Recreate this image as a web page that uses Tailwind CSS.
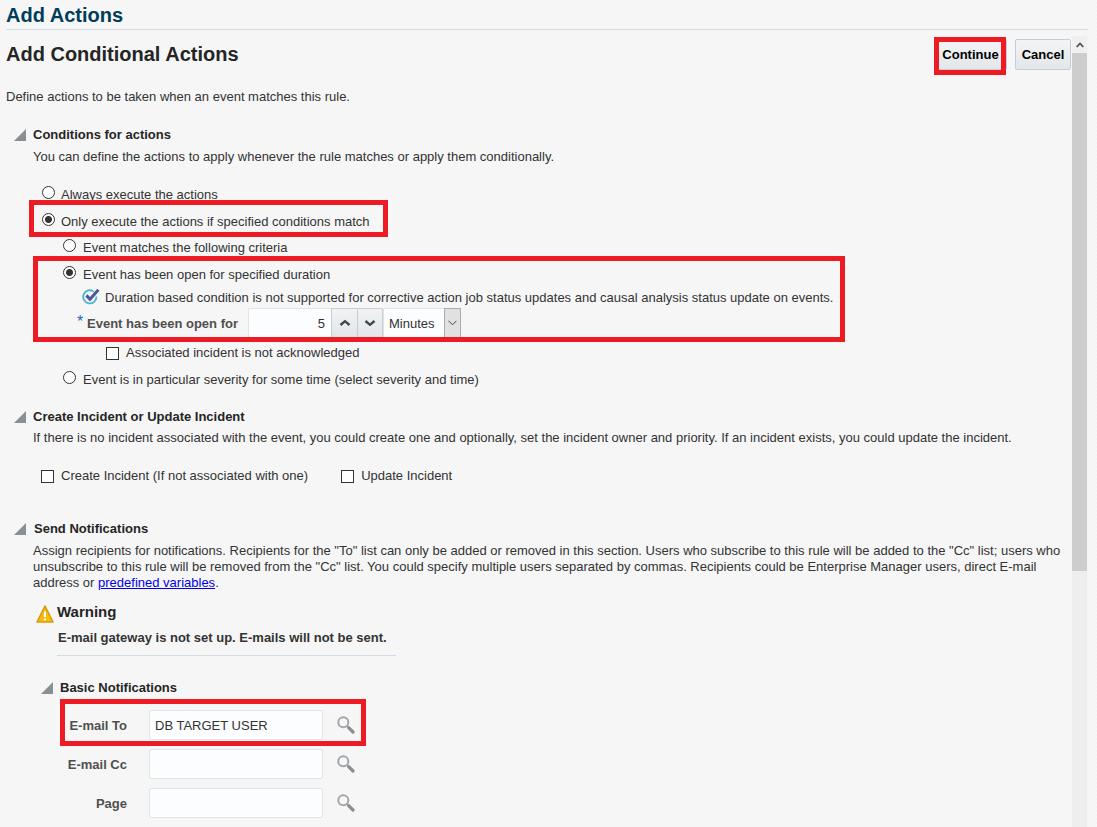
<!DOCTYPE html>
<html lang="en">
<head>
<meta charset="utf-8">
<meta name="viewport" content="width=device-width, initial-scale=1">
<title>Add Actions</title>
<script src="https://cdn.jsdelivr.net/npm/@tailwindcss/browser@4"></script>
</head>
<body class="min-h-screen bg-[#f6f6f6] bg-[linear-gradient(45deg,#f4f4f4_25%,#f8f8f8_25%_50%,#f4f4f4_50%_75%,#f8f8f8_75%)] bg-[size:4px_4px] font-['Liberation_Sans',Arial,sans-serif] text-[13px] leading-4 text-[#333333]">
<svg class="hidden" aria-hidden="true">
  <symbol id="disclose" viewBox="0 0 12 12"><path d="M12 0V12H0Z" fill="#8a8f94"/></symbol>
  <symbol id="search" viewBox="0 0 18 18"><circle cx="6.3" cy="6.3" r="5" fill="#f8f8f8" stroke="#a3a7aa" stroke-width="2"/><path d="M10 10l2 2" stroke="#a8abad" stroke-width="1.6"/><path d="M11.6 11.6L16 16" stroke="#8b8f93" stroke-width="3.2" stroke-linecap="round"/></symbol>
</svg>
<div class="relative flex min-h-screen flex-col">
  <header class="mr-[9px] ml-1.5 h-[30px] border-b border-[#d0dde5] pt-[3px]">
    <h1 class="text-xl leading-6 font-bold text-[#003d5b]">Add Actions</h1>
  </header>
  <div class="mt-1.5 mr-[9px] ml-1.5 flex flex-1">
    <main class="min-w-0 flex-1">
      <div class="mt-[3px] flex h-[31px] items-stretch justify-between">
        <h2 class="pt-[3px] text-xl leading-6 font-bold text-[#252525]">Add Conditional Actions</h2>
        <div class="mr-px flex gap-2">
          <button type="button" class="w-[73px] rounded-xs border border-[#c4ced7] bg-linear-to-b from-[#f3f4f5] to-[#e3e7ea] text-center font-bold text-black">Continue</button>
          <button type="button" class="w-14 rounded-xs border border-[#c4ced7] bg-linear-to-b from-[#f3f4f5] to-[#e3e7ea] text-center font-bold text-black">Cancel</button>
        </div>
      </div>
      <p class="mt-[19px]">Define actions to be taken when an event matches this rule.</p>

      <section class="mt-[22px] pl-[27px]">
        <h3 class="-ml-[19px] flex items-center gap-[7px] font-bold text-[#252525]"><svg class="size-3"><use href="#disclose"/></svg>Conditions for actions</h3>
        <p class="mt-1.5">You can define the actions to apply whenever the rule matches or apply them conditionally.</p>
        <div class="mt-[22px] pl-[9px]">
          <label class="flex items-start gap-1.5"><input type="radio" name="when" class="-mt-px size-[13px] appearance-none rounded-full border border-[#333333] bg-white checked:bg-[radial-gradient(circle,#333333_0_3px,#ffffff_4px)]">Always execute the actions</label>
          <label class="mt-[11px] flex items-start gap-1.5"><input type="radio" name="when" checked class="-mt-px size-[13px] appearance-none rounded-full border border-[#333333] bg-white checked:bg-[radial-gradient(circle,#333333_0_3px,#ffffff_4px)]">Only execute the actions if specified conditions match</label>
          <div class="pl-[21px]">
            <label class="mt-2.5 flex items-start gap-[7px]"><input type="radio" name="crit" class="-mt-px size-[13px] appearance-none rounded-full border border-[#333333] bg-white checked:bg-[radial-gradient(circle,#333333_0_3px,#ffffff_4px)]">Event matches the following criteria</label>
            <label class="mt-[11px] flex items-start gap-[7px]"><input type="radio" name="crit" checked class="-mt-px size-[13px] appearance-none rounded-full border border-[#333333] bg-white checked:bg-[radial-gradient(circle,#333333_0_3px,#ffffff_4px)]">Event has been open for specified duration</label>
            <p class="mt-[7px] flex gap-[5px] pl-[19px] whitespace-nowrap"><svg class="-my-0.5 size-[18px] shrink-0" viewBox="0 0 18 18"><path d="M11.8 3.6A6.6 6.6 0 1 0 14.4 8.5" fill="#eef8fa" stroke="#4db3cb" stroke-width="1.8"/><path d="M4.4 7.4L8 11.2L16.4 1.8" fill="none" stroke="#50549a" stroke-width="3"/></svg>Duration based condition is not supported for corrective action job status updates and causal analysis status update on events.</p>
            <div class="mt-0.5 flex h-[30px] items-center pl-3.5">
              <span class="mr-0.5 w-2 pb-0.5 text-base font-normal text-[#1c68b8]" aria-hidden="true">*</span>
              <label for="dur" class="w-[161px] pt-0.5 font-bold text-[#4f4f4f]">Event has been open for</label>
              <input id="dur" value="5" class="h-[30px] w-[83px] rounded-l-xs border border-r-0 border-[#dfe4e7] bg-[#fcfdfe] pr-1.5 text-right">
              <button type="button" aria-label="Increase" class="flex h-[30px] w-[26px] items-center justify-center border border-r-0 border-[#c4ced7] bg-linear-to-b from-[#f0f2f3] to-[#e3e7ea]"><svg class="h-2 w-3" viewBox="0 0 12 8"><path d="M1.5 6L6 2.2L10.5 6" fill="none" stroke="#454545" stroke-width="2.4"/></svg></button>
              <button type="button" aria-label="Decrease" class="flex h-[30px] w-[26px] items-center justify-center rounded-r-xs border border-[#c4ced7] bg-linear-to-b from-[#f0f2f3] to-[#e3e7ea]"><svg class="h-2 w-3" viewBox="0 0 12 8"><path d="M1.5 2L6 5.8L10.5 2" fill="none" stroke="#454545" stroke-width="2.4"/></svg></button>
              <span class="relative flex h-[30px] w-[78px]">
                <select aria-label="Duration unit" class="w-full appearance-none border border-[#dfe4e7] bg-[#fcfdfe] pt-px pl-[5px]"><option>Minutes</option></select>
                <span class="pointer-events-none absolute inset-y-0 right-0 flex w-[17px] items-center justify-center border border-[#adadad] bg-[#e1e1e1]"><svg class="h-1.5 w-[9px]" viewBox="0 0 9 6"><path d="M.5 .8L4.5 4.8L8.5 .8" fill="none" stroke="#444444"/></svg></span>
              </span>
            </div>
            <label class="mt-[7px] flex items-center gap-[7px] pl-[43px]"><input type="checkbox" class="size-[13px] appearance-none border border-[#333333] bg-white checked:bg-[#333333]">Associated incident is not acknowledged</label>
            <label class="mt-[11px] flex items-start gap-[7px]"><input type="radio" name="crit" class="-mt-px size-[13px] appearance-none rounded-full border border-[#333333] bg-white checked:bg-[radial-gradient(circle,#333333_0_3px,#ffffff_4px)]">Event is in particular severity for some time (select severity and time)</label>
          </div>
        </div>
      </section>

      <section class="mt-[21px] pl-[27px]">
        <h3 class="-ml-[19px] flex items-center gap-[7px] font-bold text-[#252525]"><svg class="size-3"><use href="#disclose"/></svg>Create Incident or Update Incident</h3>
        <p class="mt-[5px]">If there is no incident associated with the event, you could create one and optionally, set the incident owner and priority. If an incident exists, you could update the incident.</p>
        <div class="mt-[22px] flex gap-[33px] pl-2">
          <label class="flex items-center gap-[7px]"><input type="checkbox" class="size-[13px] appearance-none border border-[#333333] bg-white checked:bg-[#333333]">Create Incident (If not associated with one)</label>
          <label class="flex items-center gap-[7px]"><input type="checkbox" class="size-[13px] appearance-none border border-[#333333] bg-white checked:bg-[#333333]">Update Incident</label>
        </div>
      </section>

      <section class="mt-[37px] pl-[27px]">
        <h3 class="-ml-[19px] flex items-center gap-2 font-bold text-[#252525]"><svg class="size-3"><use href="#disclose"/></svg>Send Notifications</h3>
        <p class="mt-1.5">Assign recipients for notifications. Recipients for the "To" list can only be added or removed in this section. Users who subscribe to this rule will be added to the "Cc" list; users who unsubscribe to this rule will be removed from the "Cc" list. You could specify multiple users separated by commas. Recipients could be Enterprise Manager users, direct E-mail address or <a href="#" class="text-[#0000ee] underline">predefined variables</a>.</p>
        <div class="mt-[11px] flex gap-[3px] pl-[3px]">
          <svg class="mt-[3px] size-[18px]" viewBox="0 0 18 18"><path d="M9 1L17 17H1Z" fill="#f7bd0a" stroke="#d79a12" stroke-width="1.6" stroke-linejoin="round"/><path d="M9 6.5V12M9 13.5V15.3" stroke="#ffffff" stroke-width="2"/></svg>
          <div class="min-w-[339px]">
            <h4 class="text-[15px] leading-5 font-bold text-[#252525]">Warning</h4>
            <p class="mt-2 border-b border-[#d0dde5] pb-[9px] pl-px font-bold">E-mail gateway is not set up. E-mails will not be sent.</p>
          </div>
        </div>
        <h4 class="mt-6 flex items-center gap-[7px] pl-2 font-bold text-[#252525]"><svg class="size-3"><use href="#disclose"/></svg>Basic Notifications</h4>
        <div class="mt-3.5 grid grid-cols-[102px_174px_18px] items-center gap-x-3.5 gap-y-[9px]">
          <label for="to" class="pt-0.5 pr-2 text-right font-bold text-[#4f4f4f]">E-mail To</label>
          <input id="to" value="DB TARGET USER" class="h-[30px] rounded-xs border border-[#dfe4e7] bg-[#fcfdfe] px-[5px]">
          <button type="button" aria-label="Search E-mail To"><svg class="size-[18px]"><use href="#search"/></svg></button>
          <label for="cc" class="pt-0.5 pr-2 text-right font-bold text-[#4f4f4f]">E-mail Cc</label>
          <input id="cc" class="h-[30px] rounded-xs border border-[#dfe4e7] bg-[#fcfdfe] px-[5px]">
          <button type="button" aria-label="Search E-mail Cc"><svg class="size-[18px]"><use href="#search"/></svg></button>
          <label for="page" class="pt-0.5 pr-2 text-right font-bold text-[#4f4f4f]">Page</label>
          <input id="page" class="h-[30px] rounded-xs border border-[#dfe4e7] bg-[#fcfdfe] px-[5px]">
          <button type="button" aria-label="Search Page"><svg class="size-[18px]"><use href="#search"/></svg></button>
        </div>
      </section>
    </main>
    <div class="w-4 shrink-0 border-r border-[#f4f4f4] bg-[#eeeeee]" aria-hidden="true">
      <div class="flex h-[17px] items-center justify-center bg-[#f0f0f0]"><svg class="h-1.5 w-2" viewBox="0 0 8 6"><path d="M.7 5L4 1.5L7.3 5" fill="none" stroke="#505050" stroke-width="1.8"/></svg></div>
      <div class="h-[518px] bg-[#cdcdcd]"></div>
    </div>
  </div>

  <!-- callout frames over the highlighted controls -->
  <div class="pointer-events-none absolute top-[37px] right-[91px] h-[38px] w-[72px] border-5 border-[#ed1c24]"></div>
  <div class="pointer-events-none absolute top-[200px] left-[29px] h-[37px] w-[359px] border-5 border-[#ed1c24]"></div>
  <div class="pointer-events-none absolute top-[256px] left-[33px] h-[86px] w-[812px] border-5 border-[#ed1c24]"></div>
  <div class="pointer-events-none absolute top-[699px] left-[60px] h-[47px] w-[306px] border-5 border-[#ed1c24]"></div>
</div>
</body>
</html>
